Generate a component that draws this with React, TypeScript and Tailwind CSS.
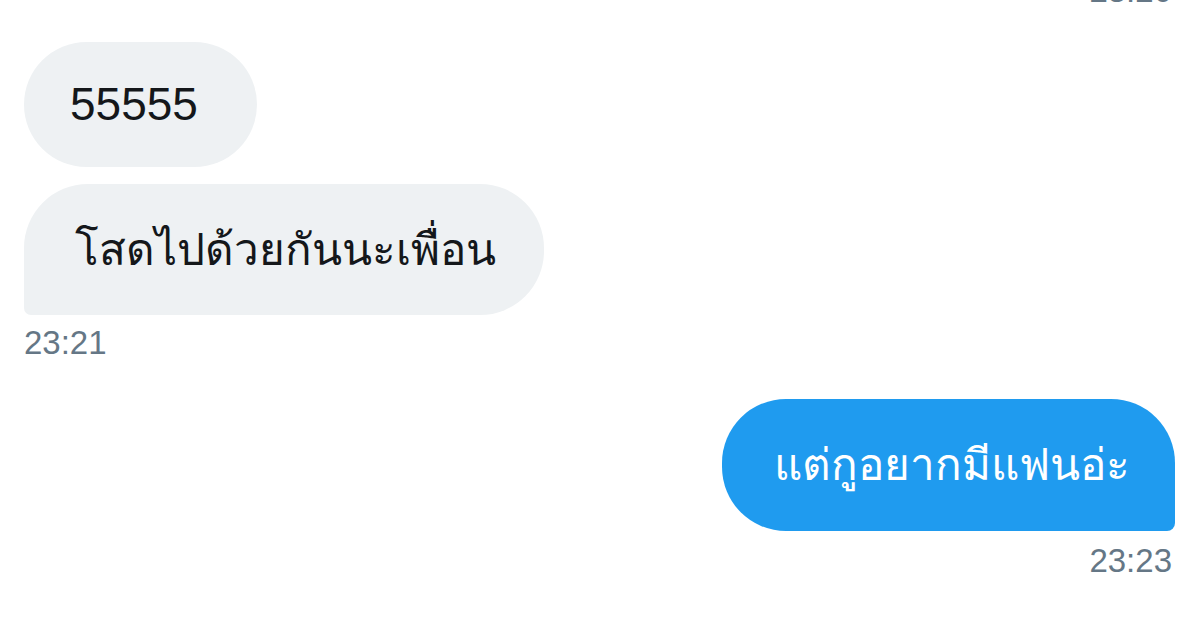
export default function App() {
  return (
    <div className="w-[1200px] h-[635px] overflow-hidden bg-white pl-6 pr-[25px] font-['Liberation_Sans','DejaVu_Sans',sans-serif]">
      {/* previous timestamp, cut off at the top */}
      <div className="-mt-[27px] flex justify-end pr-[3px] text-[33px] leading-[36px] text-[#657786]">23:20</div>

      {/* incoming */}
      <div className="mt-[33px] flex flex-col items-start">
        <div className="flex h-[125px] items-center rounded-[63px] bg-[#eef1f3] pl-[46px] pr-[59px] text-[46px] text-[#14171a]">
          55555
        </div>
        <div className="mt-[17px] flex h-[131px] items-center rounded-[64px] rounded-bl-[7px] bg-[#eef1f3] pl-[51px] pr-[48px] text-[44px] text-[#14171a]">
          โสดไปด้วยกันนะเพื่อน
        </div>
        <div className="mt-[8px] text-[33px] leading-[40px] text-[#657786]">23:21</div>
      </div>

      {/* outgoing */}
      <div className="mt-[36px] flex flex-col items-end">
        <div className="flex h-[132px] items-center rounded-[64px] rounded-br-[8px] bg-[#1f9bef] pl-[52px] pr-[45px] text-[44px] text-white">
          แต่กูอยากมีแฟนอ่ะ
        </div>
        <div className="mt-[10px] pr-[3px] text-[33px] leading-[40px] text-[#657786]">23:23</div>
      </div>
    </div>
  );
}
